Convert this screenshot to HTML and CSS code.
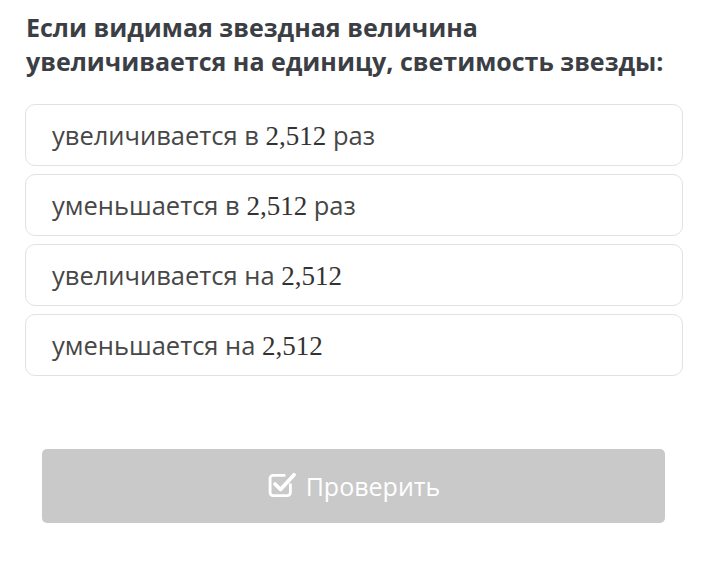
FILE: index.html
```html
<!DOCTYPE html>
<html>
<head>
	<meta charset="utf-8">
	<link rel="stylesheet" href="styles.css">
	<title>Вопрос</title>
</head>
<body>
	<div class="quiz">
		<div class="question">Если видимая звездная величина<br>увеличивается на единицу, светимость звезды:</div>
		<div class="options">
			<div class="option">увеличивается в <span class="num">2,512</span> раз</div>
			<div class="option">уменьшается в <span class="num">2,512</span> раз</div>
			<div class="option">увеличивается на <span class="num">2,512</span></div>
			<div class="option">уменьшается на <span class="num">2,512</span></div>
		</div>
		<div class="actions">
			<button class="check">
				<svg class="icon" viewBox="0 0 26 26" width="32" height="32">
					<path d="M19 12.5 V20 a2.5 2.5 0 0 1 -2.5 2.5 H5 a2.5 2.5 0 0 1 -2.5 -2.5 V8.5 a2.5 2.5 0 0 1 2.5 -2.5 H15" fill="none" stroke="#fff" stroke-width="2.3"/>
					<path d="M6.5 13 L11 17.5 L22 5.5" fill="none" stroke="#fff" stroke-width="3" stroke-linecap="round" stroke-linejoin="round"/>
				</svg>
				Проверить
			</button>
		</div>
	</div>
</body>
</html>
```

FILE: styles.css
```css
html {
	font-family: "Open Sans", "Noto Sans", sans-serif;
	background-color: #fff
}

body {
	margin: 0;
	color: #444
}

.quiz {
	padding: 10px 30px 0 25px
}

.question {
	font-weight: 700;
	font-size: 25px;
	line-height: 34px;
	color: #3b3f45;
	padding-left: 1px;
	white-space: nowrap
}

.options {
	display: flex;
	flex-direction: column;
	gap: 8px;
	margin-top: 26px
}

.option {
	border: 1px solid #e2e2e2;
	border-radius: 10px;
	height: 60px;
	line-height: 60px;
	padding-left: 26px;
	font-size: 25.5px;
	color: #474747;
	white-space: nowrap
}

.num {
	font-family: "Liberation Serif", serif;
	font-size: 27px;
	color: #333
}

.actions {
	padding: 73px 18px 0 17px
}

.check {
	width: 100%;
	height: 74px;
	border: none;
	border-radius: 5px;
	background-color: #c9c9c9;
	color: #fff;
	font-family: "Open Sans", sans-serif;
	font-size: 25px;
	display: flex;
	align-items: center;
	justify-content: center;
	gap: 7px
}

.icon {
	display: block;
	margin-top: -4px
}
```
